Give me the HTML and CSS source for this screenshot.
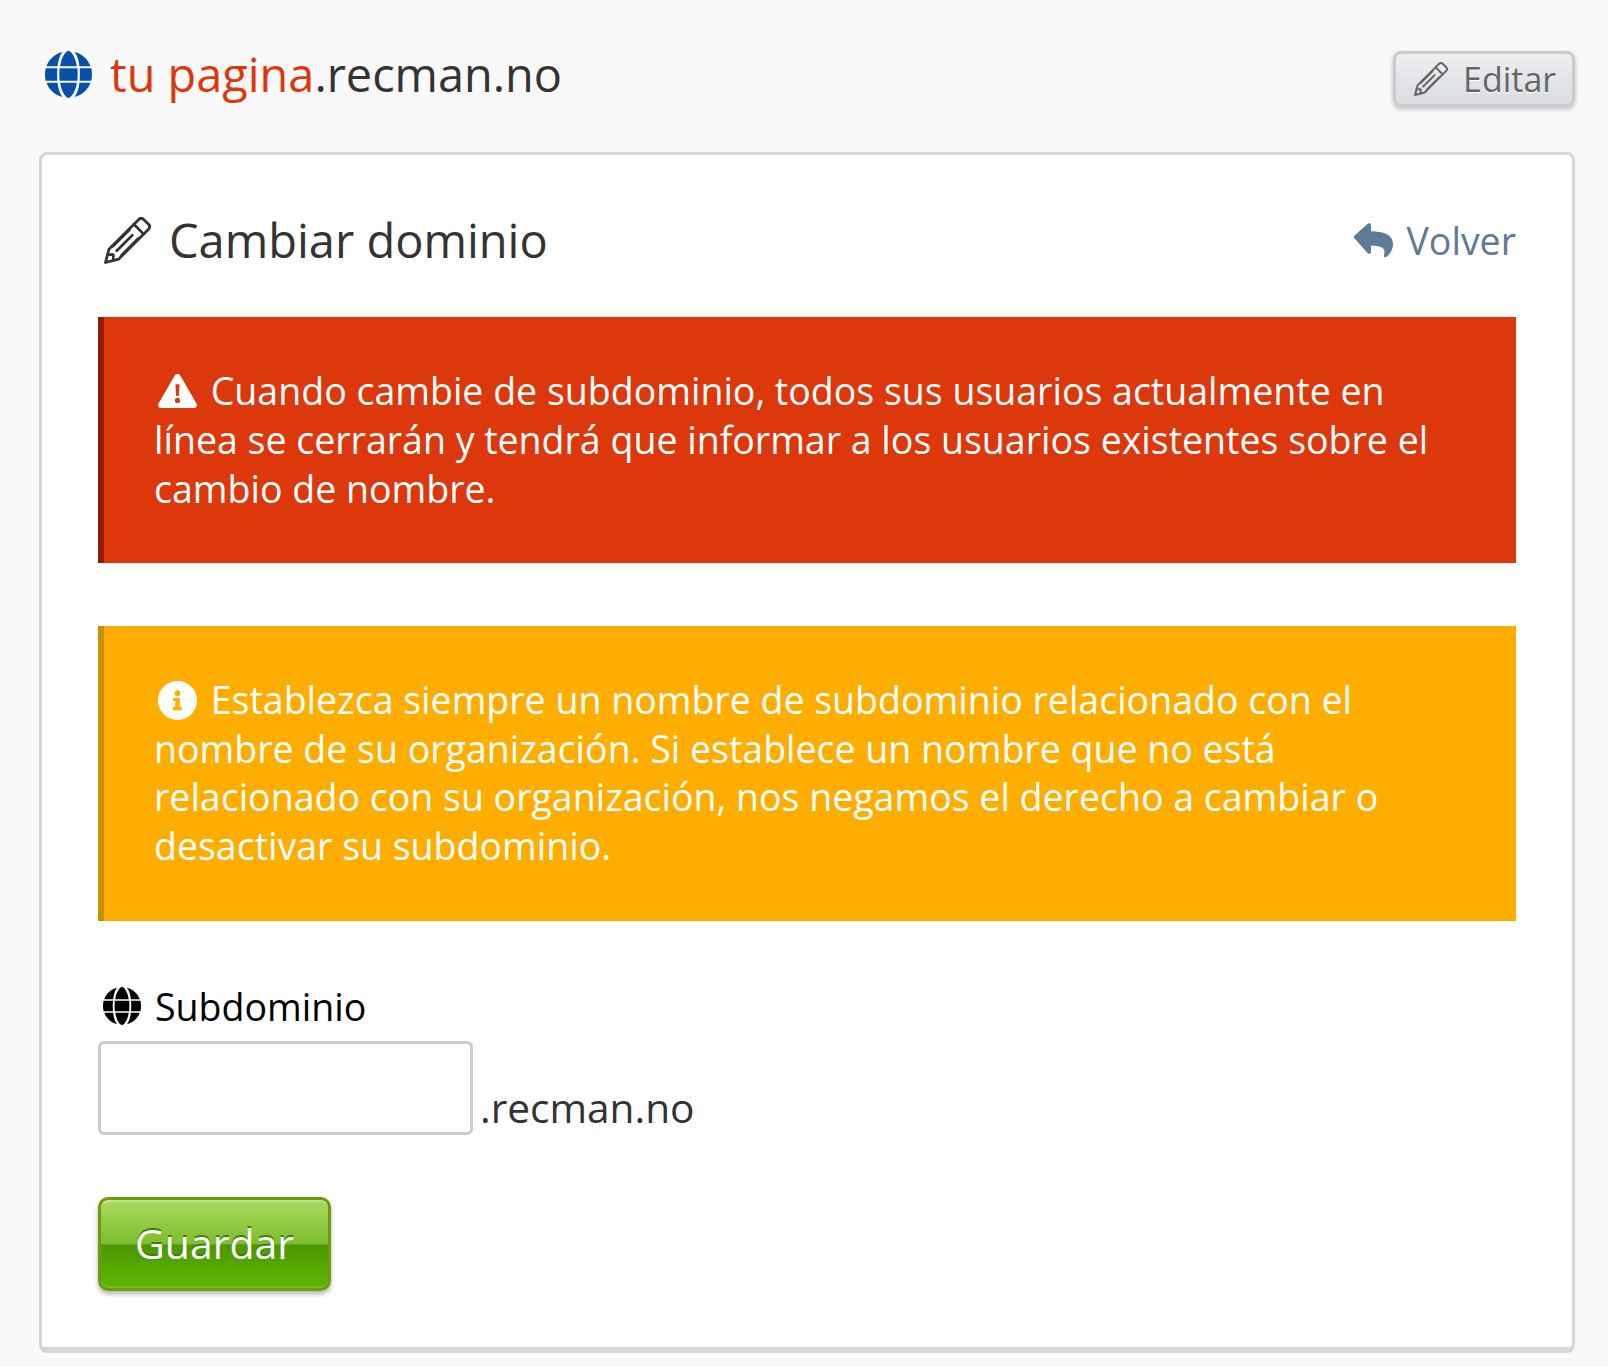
FILE: index.html
```html
<!DOCTYPE html>
<html lang="es">
<head>
<meta charset="utf-8">
<title>Cambiar dominio</title>
<link rel="stylesheet" href="styles.css">
</head>
<body>
<svg class="defs" width="0" height="0">
  <defs>
    <symbol id="globe" viewBox="0 0 48 48">
      <path fill="currentColor" d="M24 0c3.300 0 7.600 7.900 8.500 15.500H15.500C16.400 7.900 20.700 0 24 0zM17.800 1C15 4.500 13.500 9.500 12.800 15.500H1.600C4 8.400 10.200 2.800 17.800 1zM30.200 1C37.800 2.800 44 8.400 46.400 15.500H35.200C34.500 9.500 33 4.500 30.200 1zM.7 17.500H12.600C12.300 21.500 12.300 26.500 12.600 30.500H.7C-.2 26.500-.2 21.500.7 17.500zM14.900 17.500H33.100C33.400 21.500 33.400 26.500 33.100 30.500H14.900C14.600 26.500 14.600 21.500 14.900 17.500zM35.400 17.500H47.300C48.200 21.500 48.200 26.500 47.300 30.500H35.400C35.700 26.500 35.700 21.500 35.400 17.500zM1.600 32.500H12.800C13.500 38.500 15 43.500 17.800 47C10.200 45.200 4 39.600 1.600 32.500zM15.500 32.500H32.500C31.600 40.100 27.300 48 24 48S16.400 40.100 15.500 32.500zM35.200 32.500H46.400C44 39.600 37.800 45.200 30.200 47C33 43.500 34.500 38.500 35.200 32.500z"/>
    </symbol>
    <symbol id="pencil" viewBox="0 0 48 48">
      <g fill="none" stroke="currentColor" stroke-width="2.800" stroke-linejoin="round" stroke-linecap="round">
        <path d="M1.500 46.500 5 33 35.500 2.500c1.500-1.500 3.500-1.500 5 0l5 5c1.500 1.500 1.500 3.500 0 5L15 43z"/>
        <path d="M30.500 7.500 40.500 17.500M9 30 26 13M18 39 35 22M13 34.500 29 18.500"/>
        <path d="M3.500 38.500 9.500 38.500 9.500 44.500"/>
      </g>
    </symbol>
    <symbol id="reply" viewBox="0 0 40 34">
      <path fill="currentColor" d="M.6 12.400 14 .6C15.200-.4 17 .4 17 2v6.300C28.500 8.500 39 11 39 21.500c0 5-3.200 9.900-6.800 12.500-1.100.8-2.700-.2-2.300-1.500 2-6.500-.6-9.500-12.900-9.900V29c0 1.600-1.800 2.400-3 1.400L.6 15.600c-.9-.8-.9-2.400 0-3.200z"/>
    </symbol>
    <symbol id="warn" viewBox="0 0 40 35">
      <path fill="currentColor" fill-rule="evenodd" d="M20 0c1.300 0 2.400.7 3 1.700l16.500 28.600c1.200 2-.3 4.700-2.800 4.700H3.300C.8 35-.7 32.300.5 30.300L17 1.700C17.600.7 18.700 0 20 0zM17.900 10.500 18.500 22.500h3L22.100 10.500zM20 24.500a2.700 2.700 0 1 0 0 5.400 2.700 2.700 0 0 0 0-5.400z"/>
    </symbol>
    <symbol id="info" viewBox="0 0 40 40">
      <path fill="currentColor" fill-rule="evenodd" d="M20 0a20 20 0 1 1 0 40 20 20 0 0 1 0-40zM20 9.500a3 3 0 1 0 0 6 3 3 0 0 0 0-6zM15.500 17.500v3h2.200v6h-2.200v3.500h9v-3.500h-2.200V17.500z"/>
    </symbol>
  </defs>
</svg>

<header class="top">
  <h1 class="site">
    <svg class="site-icon"><use href="#globe"/></svg>
    <span class="site-name"><span class="site-sub">tu pagina</span>.recman.no</span>
  </h1>
  <button class="edit" type="button">
    <svg class="edit-icon"><use href="#pencil"/></svg>
    <span>Editar</span>
  </button>
</header>

<main class="card">
  <div class="card-head">
    <h2 class="title">
      <svg class="title-icon"><use href="#pencil"/></svg>
      <span>Cambiar dominio</span>
    </h2>
    <a class="back" href="#">
      <svg class="back-icon"><use href="#reply"/></svg>
      <span>Volver</span>
    </a>
  </div>

  <p class="alert alert-red"><svg class="alert-icon warn-icon"><use href="#warn"/></svg> Cuando cambie de subdominio, todos sus usuarios actualmente en línea se cerrarán y tendrá que informar a los usuarios existentes sobre el cambio de nombre.</p>

  <p class="alert alert-amber"><svg class="alert-icon info-icon"><use href="#info"/></svg> Establezca siempre un nombre de subdominio relacionado con el nombre de su organización. Si establece un nombre que no está relacionado con su organización, nos negamos el derecho a cambiar o desactivar su subdominio.</p>

  <form class="form">
    <label class="label" for="sub">
      <svg class="label-icon"><use href="#globe"/></svg>
      <span>Subdominio</span>
    </label>
    <div class="field">
      <input class="input" id="sub" type="text">
      <span class="suffix">.recman.no</span>
    </div>
    <button class="save" type="button">Guardar</button>
  </form>
</main>
</body>
</html>
```

FILE: styles.css
```css
* { box-sizing: border-box; }
html, body { margin: 0; }
body {
  background: #f9f9f9;
  color: #333;
  font-family: "Open Sans", sans-serif;
  padding: 0 33px 13px 39px;
  height: 1366px;
  overflow: hidden;
}
.defs { position: absolute; }
.top {
  display: flex;
  justify-content: space-between;
  align-items: flex-start;
  height: 152px;
  padding-top: 51px;
}
.site {
  display: flex;
  align-items: center;
  gap: 18px;
  margin: 0;
  padding-left: 6px;
  height: 47px;
  font-size: 46.875px;
  font-weight: 400;
  line-height: 47px;
}
.site-name { margin-bottom: 1px; }
.site-icon { width: 47px; height: 47px; color: #0650a8; }
.site-sub { color: #df370d; }
.edit {
  display: flex;
  align-items: center;
  gap: 15px;
  width: 182px;
  height: 56px;
  padding: 0 0 0 18px;
  border: 3px solid #cbcbcb;
  border-radius: 8px;
  background: linear-gradient(#eeeff2, #d9dce0);
  box-shadow: 0 2px 4px rgba(0,0,0,.25);
  color: #666;
  font-family: inherit;
  font-size: 34px;
  text-shadow: 0 1px 0 #fff;
}
.edit-icon { width: 34px; height: 34px; flex: none; }
.card {
  height: 1201px;
  padding: 57px 56px 0;
  background: #fff;
  border: 3px solid #d6d6d6;
  border-bottom-width: 6px;
  border-radius: 8px;
}
.card-head {
  display: flex;
  justify-content: space-between;
  align-items: center;
  height: 52px;
  padding-top: 4px;
}
.title {
  display: flex;
  align-items: center;
  gap: 18px;
  margin: 0;
  padding-left: 6px;
  font-size: 47px;
  font-weight: 400;
  line-height: 52px;
}
.title-icon { width: 47px; height: 47px; flex: none; }
.back {
  display: flex;
  align-items: center;
  gap: 13px;
  color: #5f7a96;
  font-size: 37.5px;
  text-decoration: none;
}
.back-icon { width: 40px; height: 34px; }
.alert {
  margin: 0;
  color: #fff;
  font-size: 37.5px;
  line-height: 48.75px;
  padding: 49.5px 50px 50.5px;
  border-left: 6px solid;
}
.alert-red {
  margin-top: 53px;
  padding-top: 50px;
  padding-bottom: 50px;
  background: #dd370c;
  border-left-color: #8f1b04;
}
.alert-amber { margin-top: 63px; background: #ffae00; border-left-color: #c99000; }
.alert-icon { width: 39px; height: 39px; vertical-align: -6px; margin: 0 4px; }
.warn-icon { height: 34px; vertical-align: -3px; }
.form { margin-top: 60px; }
.label {
  display: flex;
  align-items: center;
  gap: 14px;
  padding-left: 5px;
  height: 50px;
  color: #000;
  font-size: 37.5px;
}
.label-icon { width: 38px; height: 38px; }
.field { display: flex; align-items: flex-end; gap: 7px; margin-top: 10px; }
.input {
  width: 375px;
  height: 94px;
  border: 3px solid #ccc;
  border-radius: 6px;
  background: #fff;
}
.suffix { font-size: 40.6px; line-height: 54px; }
.save {
  display: block;
  margin-top: 62px;
  width: 233px;
  height: 94px;
  padding-bottom: 3px;
  border: 3px solid #6f9a0f;
  border-radius: 10px;
  background: linear-gradient(#aad960 0, #7dbe2d 50%, #4a9600 51%, #5ab104 88%);
  box-shadow: inset 0 2px 0 rgba(255,255,255,.3), inset 0 -2px 0 rgba(255,255,255,.15), 0 3px 5px rgba(0,0,0,.3);
  color: #fff;
  font-family: inherit;
  font-size: 41px;
  text-shadow: 0 -2px 0 #3f7f00;
}
```
